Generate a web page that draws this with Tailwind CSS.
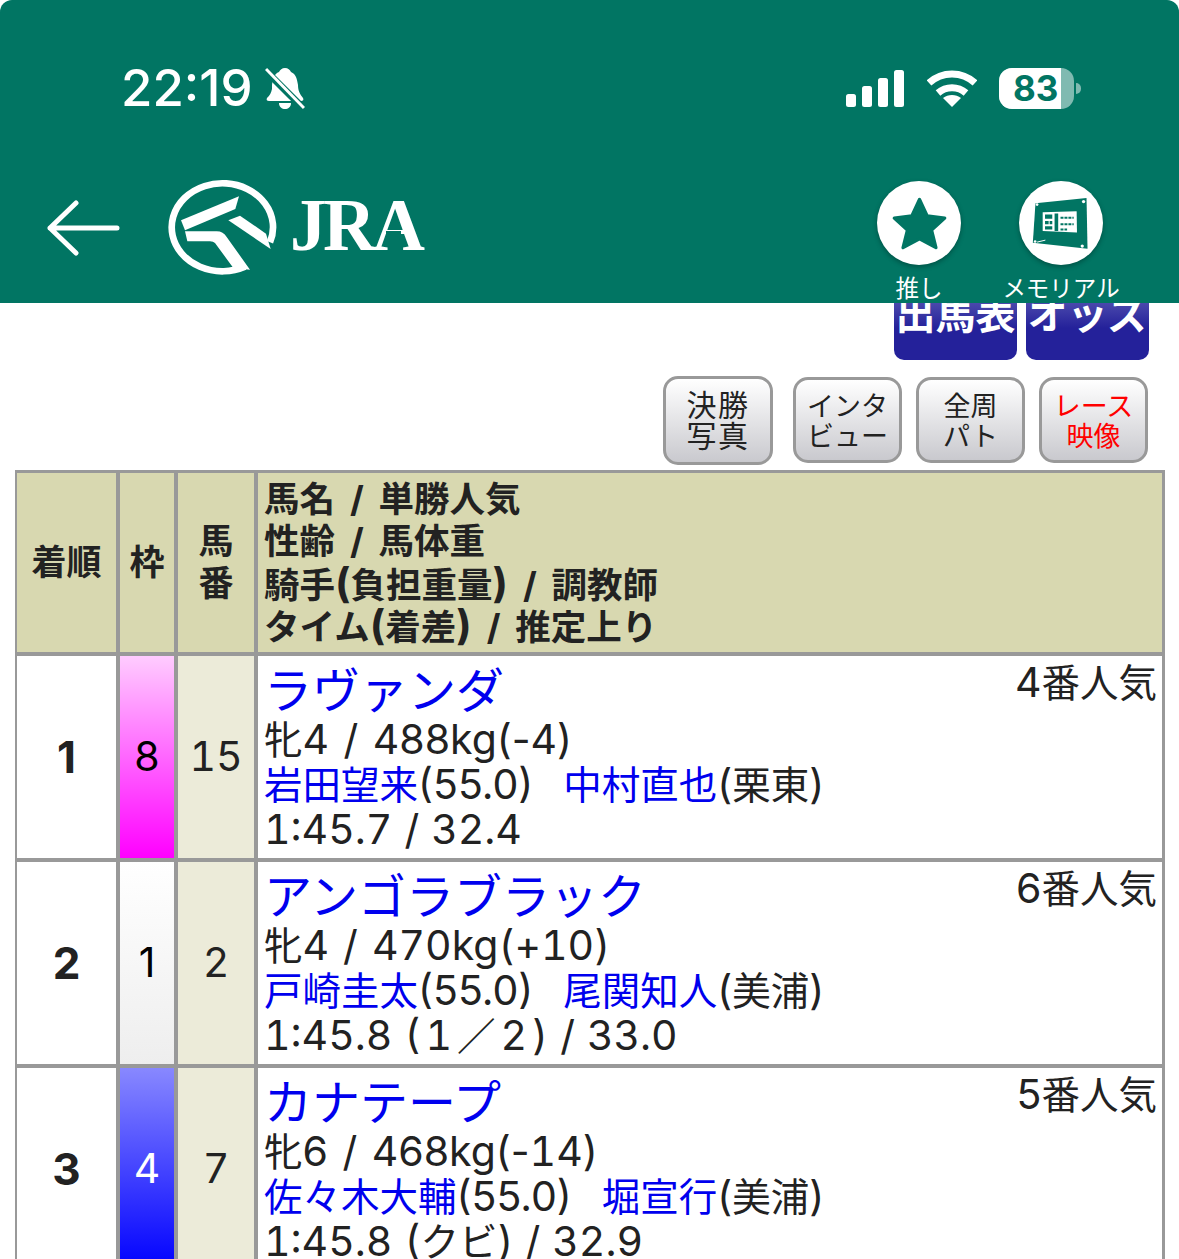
<!DOCTYPE html>
<html lang="ja">
<head>
  <meta charset="UTF-8" />
  <title>JRA レース結果</title>
  <script src="https://cdn.jsdelivr.net/npm/@tailwindcss/browser@4"></script>
</head>
<body class="bg-white text-[#222] font-['Inter','Noto_Sans_CJK_JP',sans-serif]">
<div class="w-[1179px] h-[1259px] overflow-hidden relative">

  <!-- Header -->
  <header class="relative z-10 h-[303px] bg-[#017563] rounded-t-[12px] text-white">
    <!-- Status bar -->
    <div class="h-[176px] flex items-center justify-between pl-[121px] pr-[98px]">
      <div class="flex items-center gap-[13px]">
        <span class="-mt-[2px] font-medium text-[51px] leading-none">22:19</span>
        <svg class="w-[40px] h-[43px] -ml-[1px]" viewBox="0 0 40 43" fill="#fff">
          <path d="M20 1c3 0 5 2 6 4 5 2 6 7 7 13 0 6 2 9 5 13 1 2 0 3-2 3H4c-2 0-3-1-2-3 3-3 4-5 5-9l0-4C8 11 9 7 14 5c1-2 3-4 6-4z"/>
          <path d="M14 36h12c0 4-3 6-6 6s-6-2-6-6z"/>
          <path d="M1 4 38 41" stroke="#017563" stroke-width="7"/>
          <path d="M1 2 39 41" stroke="#fff" stroke-width="3"/>
        </svg>
      </div>
      <div class="flex items-center">
        <svg class="w-[58px] h-[37px]" viewBox="0 0 58 37" fill="#fff">
          <rect x="0" y="24" width="10" height="13" rx="2.5"/>
          <rect x="16" y="16" width="10" height="21" rx="2.5"/>
          <rect x="32" y="8" width="10" height="29" rx="2.5"/>
          <rect x="48" y="0" width="10" height="37" rx="2.5"/>
        </svg>
        <svg class="w-[50px] h-[37px] ml-[23px]" viewBox="0 0 50 37" fill="none" stroke="#fff" stroke-width="7">
          <path d="M2 13C15 1 35 1 48 13"/>
          <path d="M11 23C19 16 31 16 39 23"/>
          <path d="M25 37 16 28C21 24 29 24 34 28Z" fill="#fff" stroke="none"/>
        </svg>
        <div class="ml-[22px] flex items-center">
          <div class="relative w-[75px] h-[41px] rounded-[13px] overflow-hidden bg-white/50">
            <div class="w-[62px] h-full bg-white"></div>
            <span class="absolute left-[14px] top-0 font-bold text-[35px] leading-[41px] text-[#017563]">83</span>
          </div>
          <div class="w-[5px] h-[11px] ml-[2px] rounded-r-full bg-white/50"></div>
        </div>
      </div>
    </div>

    <!-- Nav -->
    <div class="flex justify-between pl-[46px] pr-[76px]">
      <div class="flex items-center h-[104px]">
        <svg class="w-[74px] h-[56px]" viewBox="0 0 74 56" fill="none" stroke="#fff" stroke-width="5" stroke-linecap="round" stroke-linejoin="round">
          <path d="M71 28H4M30 3 4 28 30 53"/>
        </svg>
        <svg class="w-[125px] h-[110px] ml-[40px]" viewBox="0 0 375 330" fill="#fff">
          <path d="M255 281A152 132 0 1 1 330 208" fill="none" stroke="#fff" stroke-width="20"/>
          <path d="M63 142 237 70 226 108 75 172Z"/>
          <path d="M75 175H170Q190 175 200 192L270 290 220 285 165 210Q160 205 150 205H82Z"/>
          <path d="M205 142 240 128 318 182 332 228Z"/>
        </svg>
        <span class="relative ml-[5px] -mt-[5px] font-['Liberation_Serif',serif] font-bold text-[73px] leading-none tracking-[-3.5px]">JRA<span class="absolute left-[96px] top-[42px] w-[15px] h-[7px] bg-[#017563]"></span></span>
      </div>
      <div class="flex pt-[5px] text-[23.5px] leading-[24px]">
        <div class="w-[84px] flex flex-col items-center">
          <div class="w-[84px] h-[84px] rounded-full bg-white shadow-[0_2px_5px_rgba(0,0,0,0.3)] flex items-center justify-center">
            <svg class="w-[57px] h-[55px]" viewBox="0 0 52 50" fill="#017563" stroke="#017563" stroke-width="3" stroke-linejoin="round">
              <path d="M26 3 33 18 49 20 37 31 41 47 26 39 11 47 15 31 3 20 19 18Z"/>
            </svg>
          </div>
          <span class="mt-[12px] whitespace-nowrap">推し</span>
        </div>
        <div class="w-[84px] ml-[58px] flex flex-col items-center">
          <div class="w-[84px] h-[84px] rounded-full bg-white shadow-[0_2px_5px_rgba(0,0,0,0.3)] flex items-center justify-center">
            <svg class="w-[85px] h-[85px]" viewBox="0 0 255 255">
              <path d="M50 66 205 50 208 204 42 186Z" fill="#017563"/>
              <path d="M72 93 175 90 176 155 72 150Z" fill="#fff"/>
              <path d="M79 100H101V113H79ZM79 120H90V130H79ZM93 120H101V130H93ZM79 136H101V146H79ZM108 97H119V150H108Z" fill="#017563"/>
              <path d="M126 110H166M126 130H166M126 146H146" stroke="#017563" stroke-width="6" stroke-dasharray="9 3"/>
              <circle cx="55" cy="70" r="4" fill="#fff"/><circle cx="196" cy="61" r="5" fill="#fff"/>
              <circle cx="49" cy="182" r="4" fill="#fff"/><circle cx="192" cy="196" r="5" fill="#fff"/>
              <path d="M55 184 80 178" stroke="#fff" stroke-width="3"/>
            </svg>
          </div>
          <span class="mt-[12px] whitespace-nowrap">メモリアル</span>
        </div>
      </div>
    </div>
  </header>

  <!-- Buttons under header -->
  <div class="flex justify-end gap-[9px] pr-[30px]">
    <div class="w-[123px] h-[57px] rounded-b-[10px] overflow-hidden bg-[linear-gradient(#4a48ac,#24219a_25px)] text-white font-bold text-[40px] leading-[40px] text-center whitespace-nowrap"><div class="-mt-[8px]">出馬表</div></div>
    <div class="w-[123px] h-[57px] rounded-b-[10px] overflow-hidden bg-[linear-gradient(#4a48ac,#24219a_25px)] text-white font-bold text-[40px] leading-[40px] text-center whitespace-nowrap"><div class="-mt-[8px]">オッズ</div></div>
  </div>

  <!-- Sub buttons -->
  <div class="flex items-center justify-end pr-[31px] mt-[16px] h-[88px] text-center">
    <div class="w-[110px] h-[89px] pt-[1px] flex flex-col justify-center border-[3px] border-[#999] rounded-[15px] bg-[linear-gradient(#fff,#c9c9ce)] text-[30px] leading-[31px] tracking-[1.5px]">決勝<br />写真</div>
    <div class="w-[109px] h-[86px] pt-[4px] ml-[20px] flex flex-col justify-center border-[3px] border-[#999] rounded-[15px] bg-[linear-gradient(#fff,#c9c9ce)] text-[27px] leading-[30px]"><div>インタ</div><div>ビュー</div></div>
    <div class="w-[109px] h-[86px] pt-[4px] ml-[14px] flex flex-col justify-center border-[3px] border-[#999] rounded-[15px] bg-[linear-gradient(#fff,#c9c9ce)] text-[27px] leading-[30px]"><div>全周</div><div>パト</div></div>
    <div class="w-[109px] h-[86px] pt-[4px] ml-[14px] flex flex-col justify-center border-[3px] border-[#999] rounded-[15px] bg-[linear-gradient(#fff,#c9c9ce)] text-[27px] leading-[30px] text-[#ff0000]"><div>レース</div><div>映像</div></div>
  </div>

  <!-- Result table -->
  <div class="ml-[15px] mt-[6px] w-[1150px] bg-[#999] pt-[3px] pl-[2px] pr-[3px] grid grid-cols-[99px_54px_76px_1fr] gap-[4px]">
    <!-- head -->
    <div class="h-[179px] bg-[#d8d8b0] flex items-center justify-center font-bold text-[35px]">着順</div>
    <div class="h-[179px] bg-[#d8d8b0] flex items-center justify-center font-bold text-[35px]">枠</div>
    <div class="h-[179px] pb-[2px] bg-[#d8d8b0] flex items-center justify-center text-center font-bold text-[35px] leading-[42px]">馬<br />番</div>
    <div class="h-[179px] bg-[#d8d8b0] pl-[6px] pt-[6px] font-bold text-[35.5px] leading-[42px] [word-spacing:6.5px]">
      <div class="h-[42px]">馬名 / 単勝人気</div>
      <div class="h-[42px]">性齢 / 馬体重</div>
      <div class="h-[42px]">騎手<span class="text-[41px] leading-none">(</span>負担重量<span class="text-[41px] leading-none">)</span> / 調教師</div>
      <div class="h-[42px]">タイム<span class="text-[41px] leading-none">(</span>着差<span class="text-[41px] leading-none">)</span> / 推定上り</div>
    </div>

    <!-- row 1 -->
    <div class="h-[202px] bg-white flex items-center justify-center font-bold text-[44px]">1</div>
    <div class="h-[202px] bg-[linear-gradient(#ffccff,#ff00ff)] flex items-center justify-center text-[41px] text-black">8</div>
    <div class="h-[202px] bg-[#ecebd9] flex items-center justify-center text-[41px] tabular-nums">15</div>
    <div class="h-[202px] bg-white pl-[6px] pr-[5px] text-[38.5px] leading-[45px] whitespace-nowrap [word-spacing:3px]">
      <div class="flex justify-between h-[61px]">
        <a class="text-[48px] leading-[70px] text-[#0000ee]">ラヴァンダ</a>
        <span class="leading-[52px]"><span class="text-[41px]">4</span>番人気</span>
      </div>
      <div class="h-[45px]">牝<span class="text-[41px]">4 / 488kg(-4)</span></div>
      <div class="h-[45px]"><a class="text-[#0000ee]">岩田望来</a><span class="text-[41px]">(55.0)</span><a class="ml-[30px] text-[#0000ee]">中村直也</a><span class="text-[41px]">(</span>栗東<span class="text-[41px]">)</span></div>
      <div class="h-[45px] text-[41px] tabular-nums [word-spacing:1px]">1:45.7 / 32.4</div>
    </div>

    <!-- row 2 -->
    <div class="h-[202px] bg-white flex items-center justify-center font-bold text-[44px]">2</div>
    <div class="h-[202px] bg-[linear-gradient(#fff,#eee)] flex items-center justify-center text-[41px] text-black">1</div>
    <div class="h-[202px] bg-[#ecebd9] flex items-center justify-center text-[41px]">2</div>
    <div class="h-[202px] bg-white pl-[6px] pr-[5px] text-[38.5px] leading-[45px] whitespace-nowrap [word-spacing:3px]">
      <div class="flex justify-between h-[61px]">
        <a class="text-[48px] leading-[70px] text-[#0000ee]">アンゴラブラック</a>
        <span class="leading-[52px]"><span class="text-[41px]">6</span>番人気</span>
      </div>
      <div class="h-[45px]">牝<span class="text-[41px] tabular-nums">4 / 470kg(+10)</span></div>
      <div class="h-[45px]"><a class="text-[#0000ee]">戸崎圭太</a><span class="text-[41px]">(55.0)</span><a class="ml-[30px] text-[#0000ee]">尾関知人</a><span class="text-[41px]">(</span>美浦<span class="text-[41px]">)</span></div>
      <div class="h-[45px] text-[41px] tabular-nums [word-spacing:1px]">1:45.8 (<span class="mx-[5px]">1</span><span class="text-[38.5px]">／</span><span class="mx-[5px]">2</span>) / 33.0</div>
    </div>

    <!-- row 3 -->
    <div class="h-[202px] bg-white flex items-center justify-center font-bold text-[44px]">3</div>
    <div class="h-[202px] bg-[linear-gradient(#8888ff,#0000ff)] flex items-center justify-center text-[41px] text-white">4</div>
    <div class="h-[202px] bg-[#ecebd9] flex items-center justify-center text-[41px]">7</div>
    <div class="h-[202px] bg-white pl-[6px] pr-[5px] text-[38.5px] leading-[45px] whitespace-nowrap [word-spacing:3px]">
      <div class="flex justify-between h-[61px]">
        <a class="text-[48px] leading-[70px] text-[#0000ee]">カナテープ</a>
        <span class="leading-[52px]"><span class="text-[41px]">5</span>番人気</span>
      </div>
      <div class="h-[45px]">牝<span class="text-[41px]">6 / 468kg(-<span class="tabular-nums">14</span>)</span></div>
      <div class="h-[45px]"><a class="text-[#0000ee]">佐々木大輔</a><span class="text-[41px]">(55.0)</span><a class="ml-[30px] text-[#0000ee]">堀宣行</a><span class="text-[41px]">(</span>美浦<span class="text-[41px]">)</span></div>
      <div class="h-[45px] text-[41px] tabular-nums [word-spacing:1px]">1:45.8 (<span class="text-[38.5px]">クビ</span>) / 32.9</div>
    </div>
  </div>

</div>
</body>
</html>
